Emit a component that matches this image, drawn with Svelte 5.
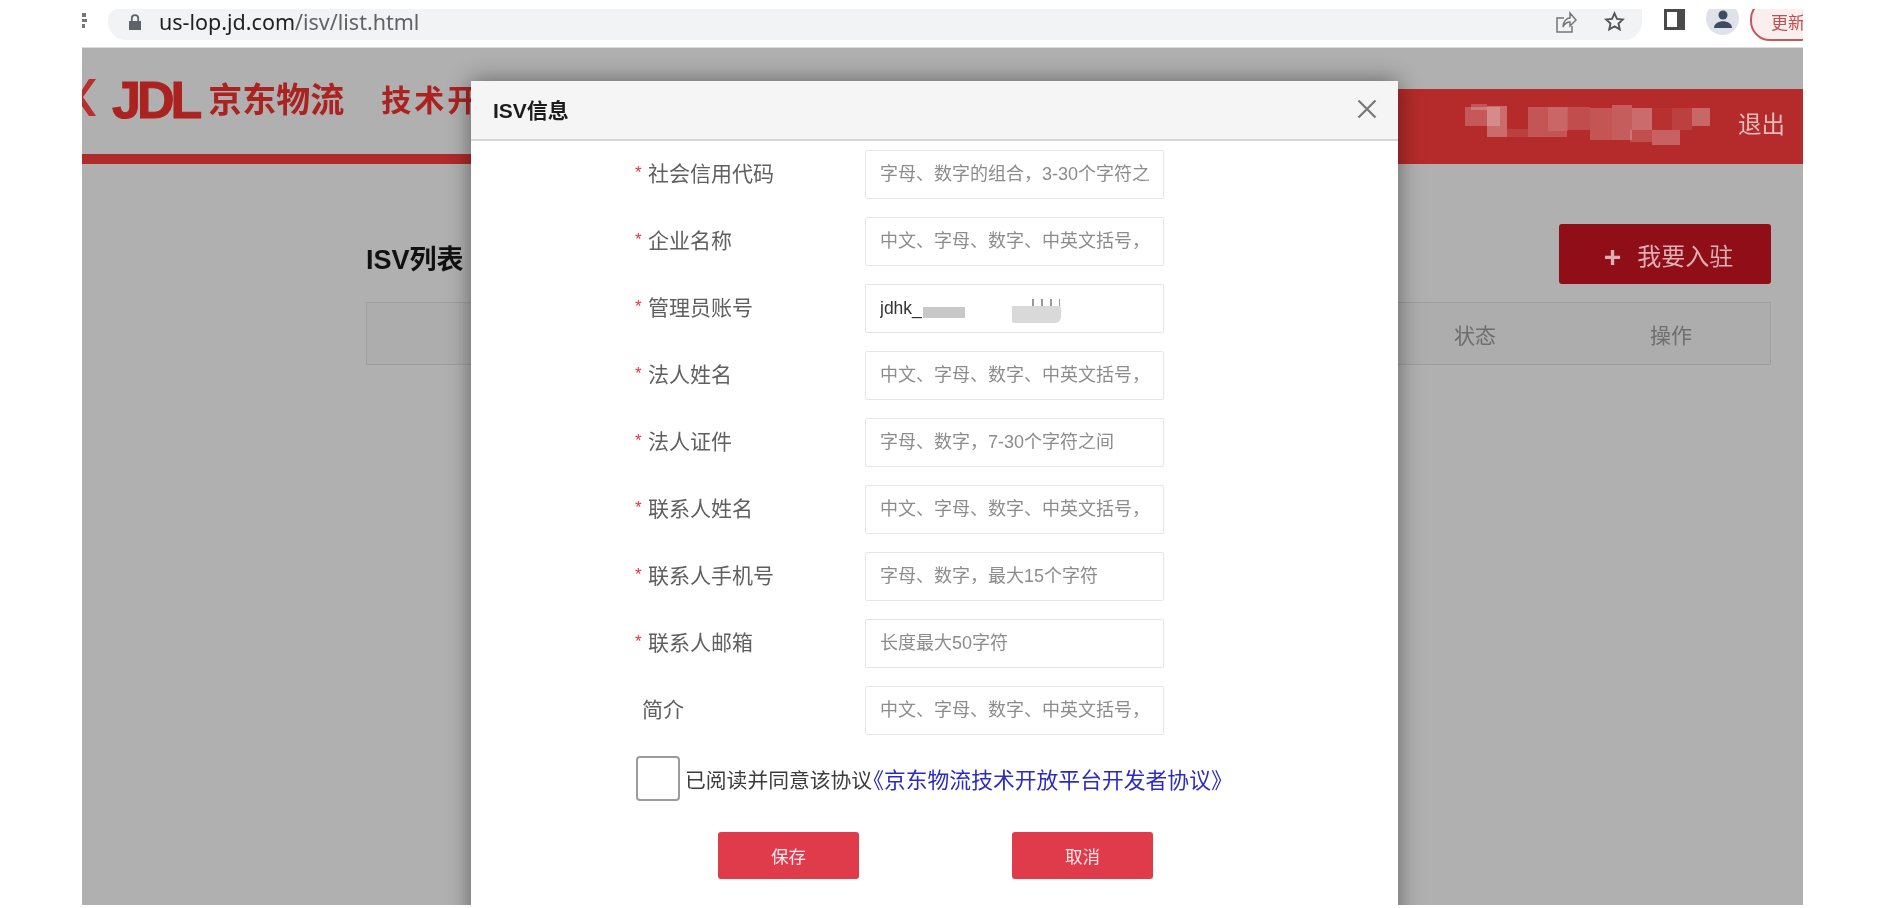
<script>
  const fields = [
    { label: '社会信用代码', required: true, hint: '字母、数字的组合，3-30个字符之间' },
    { label: '企业名称', required: true, hint: '中文、字母、数字、中英文括号，2-50个字符' },
    { label: '管理员账号', required: true, value: 'jdhk_', masked: true },
    { label: '法人姓名', required: true, hint: '中文、字母、数字、中英文括号，2-50个字符' },
    { label: '法人证件', required: true, hint: '字母、数字，7-30个字符之间' },
    { label: '联系人姓名', required: true, hint: '中文、字母、数字、中英文括号，2-50个字符' },
    { label: '联系人手机号', required: true, hint: '字母、数字，最大15个字符' },
    { label: '联系人邮箱', required: true, hint: '长度最大50字符' },
    { label: '简介', required: false, hint: '中文、字母、数字、中英文括号，2-50个字符' }
  ];

  // 用户名打码的马赛克 [x, y, w, h, 透明度]
  const mosaic = [
    [0, 3, 35, 19, 0.22], [6, 0, 16, 6, 0.2], [22, 2, 20, 31, 0.3], [42, 25, 21, 8, 0.1],
    [63, 3, 39, 30, 0.2], [83, 3, 20, 24, 0.1], [102, 3, 23, 23, 0.16], [125, 4, 22, 32, 0.2],
    [147, 1, 20, 35, 0.24], [167, 4, 20, 22, 0.3], [165, 26, 22, 12, 0.16], [187, 26, 28, 15, 0.26],
    [187, 4, 20, 22, 0.03], [207, 4, 20, 22, 0.1], [227, 4, 18, 18, 0.28]
  ];
</script>

<div class="screen">
  <div class="browser">
    <div class="toolbar">
      <div class="toolbar-row">
        <svg class="cut-icon" width="5" height="16" viewBox="0 0 5 16"><path d="M0 1h4v4H0zM0 7h5v3H0zM0 12h3v4H0z" fill="#777" /></svg>
        <div class="omnibox">
          <svg class="lock" width="14" height="16" viewBox="0 0 14 16">
            <path d="M1 7h12v9H1z" fill="#5f6368" />
            <path d="M3.8 7V4.4a3.2 3.2 0 0 1 6.4 0V7" fill="none" stroke="#5f6368" stroke-width="1.8" />
          </svg>
          <span class="url"><b>us-lop.jd.com</b>/isv/list.html</span>
          <svg class="share" width="22" height="24" viewBox="0 0 22 24" fill="none" stroke="#777" stroke-width="1.5">
            <path d="M9 8H2v14h15v-6" />
            <path d="M8 17c0-6 4-9 7-9V3l6 7-6 6v-4c-3 0-5 1-7 5z" />
          </svg>
          <svg class="star" width="21" height="21" viewBox="0 0 22 22" fill="none" stroke="#555" stroke-width="2">
            <path d="M11 2.5l2.6 5.7 6.2.7-4.6 4.2 1.3 6.1L11 16.1l-5.5 3.1 1.3-6.1-4.6-4.2 6.2-.7z" />
          </svg>
        </div>
        <div class="panel-icon"></div>
        <div class="avatar">
          <svg width="20" height="18" viewBox="0 0 22 20" fill="#3e4b60">
            <circle cx="11" cy="5.5" r="5" />
            <path d="M1 20c0-5 5-7.5 10-7.5s10 2.5 10 7.5z" />
          </svg>
        </div>
        <div class="update">更新</div>
      </div>
    </div>

    <div class="page">
      <header class="site-header">
        <div class="brand">
          <svg class="mark" width="14" height="37" viewBox="0 0 14 37"><path d="M14 0L1 18l13 19H7L0 27V11L7 0z" fill="#b6302f" /></svg>
          <span class="jdl">JDL</span>
          <span class="brand-name">京东物流</span>
          <span class="brand-sub">技术开放平台</span>
        </div>
        <div class="user-bar">
          <svg class="user-mask" width="250" height="42" viewBox="0 0 250 42">
            {#each mosaic as m}
              <rect x={m[0]} y={m[1]} width={m[2]} height={m[3]} fill="#fff" fill-opacity={m[4]} />
            {/each}
          </svg>
          <span class="logout">退出</span>
        </div>
      </header>

      <main class="list">
        <div class="list-head">
          <h2>ISV列表</h2>
          <button class="join"><span class="plus">+</span>我要入驻</button>
        </div>
        <div class="table-head">
          <span class="col-status">状态</span>
          <span class="col-action">操作</span>
        </div>
      </main>

      <div class="modal">
        <div class="modal-title">
          <span>ISV信息</span>
          <svg width="20" height="20" viewBox="0 0 20 20" stroke="#777" stroke-width="2.2"><path d="M1.5 1.5l17 17M18.5 1.5l-17 17" /></svg>
        </div>
        <div class="form">
          {#each fields as f}
            <div class="row">
              <label class="field-label" class:plain={!f.required}>
                {#if f.required}<i>*</i>{/if}{f.label}
              </label>
              <div class="field">
                <input class:filled={f.value} value={f.value ?? ''} placeholder={f.hint ?? ''} />
                {#if f.masked}
                  <span class="blot one"></span>
                  <span class="blot two"></span>
                  <span class="blot specks"></span>
                {/if}
              </div>
            </div>
          {/each}

          <div class="agree">
            <span class="check"></span>
            <span>已阅读并同意该协议</span><a href="/agreement">《京东物流技术开放平台开发者协议》</a>
          </div>

          <div class="actions">
            <button>保存</button>
            <button>取消</button>
          </div>
        </div>
      </div>
    </div>
  </div>
</div>

<style>
  :global(body) {
    margin: 0;
    background: #fff;
  }
  .screen {
    width: 1878px;
    height: 908px;
    overflow: hidden;
    padding-left: 82px;
    box-sizing: border-box;
    font-family: "Liberation Sans", "Noto Sans CJK SC", sans-serif;
    filter: blur(0.45px);
  }
  .browser { width: 1721px; }

  /* 浏览器工具栏，截图顶部被裁掉 */
  .toolbar {
    height: 48px;
    box-sizing: border-box;
    padding-top: 9px;
    background: #fff;
    border-bottom: 1px solid #dcdcdc;
  }
  .toolbar-row {
    height: 38px;
    display: flex;
    align-items: flex-start;
    overflow: hidden;
  }
  .cut-icon { margin-top: 3px; margin-right: 21px; flex: none; }
  .omnibox {
    width: 1534px;
    height: 31px;
    flex: none;
    box-sizing: border-box;
    padding-bottom: 6px;
    display: flex;
    align-items: center;
    background: #f1f3f4;
    border-radius: 10px 0 18px 18px;
  }
  .lock { margin-left: 20px; flex: none; }
  .url {
    margin-left: 17px;
    font-family: "Noto Sans", sans-serif;
    font-size: 21.5px;
    color: #5f6368;
    line-height: 25px;
  }
  .url b { font-weight: 400; color: #202124; }
  .share { margin-left: auto; flex: none; }
  .star { margin-left: 27px; margin-right: 17px; flex: none; }
  .panel-icon {
    margin-left: 22px;
    width: 21px;
    height: 21px;
    flex: none;
    box-sizing: border-box;
    border: 3px solid #4a4a4a;
    border-right-width: 8px;
    background: #fff;
  }
  .avatar {
    margin-left: 21px;
    margin-top: -7px;
    width: 33px;
    height: 33px;
    flex: none;
    border-radius: 50%;
    background: #dfe2e8;
    display: flex;
    align-items: center;
    justify-content: center;
  }
  .update {
    margin-left: 11px;
    margin-top: -10px;
    width: 70px;
    height: 42px;
    flex: none;
    box-sizing: border-box;
    padding: 8px 0 0 19px;
    border: 2px solid #c4585c;
    border-radius: 20px;
    background: #fbeeee;
    color: #c0504f;
    font-size: 17px;
    white-space: nowrap;
  }

  /* 页面（遮罩后） */
  .page {
    position: relative;
    height: 857px;
    overflow: hidden;
    background: #b0b0b0;
  }
  .site-header {
    display: flex;
    align-items: flex-end;
    height: 116px;
  }
  .brand {
    flex: 1;
    height: 100%;
    box-sizing: border-box;
    border-bottom: 10px solid #b02a2a;
    display: flex;
    align-items: flex-start;
    padding-top: 31px;
    color: #ab2320;
    white-space: nowrap;
    overflow: hidden;
  }
  .mark { flex: none; }
  .jdl {
    margin-left: 16px;
    margin-top: -3px;
    font-size: 52px;
    line-height: 48px;
    font-weight: 700;
    letter-spacing: -4px;
    -webkit-text-stroke: 1px #ab2320;
  }
  .brand-name {
    margin-left: 10px;
    margin-top: 3px;
    font-size: 34px;
    line-height: 36px;
    font-weight: 700;
  }
  .brand-sub {
    margin-left: 37px;
    margin-top: 4px;
    font-size: 30px;
    line-height: 36px;
    font-weight: 700;
    letter-spacing: 3px;
  }
  .user-bar {
    width: 560px;
    height: 75px;
    flex: none;
    box-sizing: border-box;
    background: #b52b2b;
    display: flex;
    align-items: center;
    justify-content: flex-end;
    padding-right: 18px;
  }
  .user-mask { margin-right: 23px; margin-top: -3px; }
  .logout { font-size: 23.5px; color: #e3bcbc; margin-top: -8px; }

  .list { padding: 60px 32px 0 284px; }
  .list-head {
    display: flex;
    justify-content: space-between;
    align-items: center;
  }
  .list-head h2 {
    margin: 0;
    padding-top: 7px;
    font-size: 27px;
    font-weight: 700;
    color: #111;
  }
  .join {
    width: 212px;
    height: 60px;
    border: 0;
    border-radius: 3px;
    background: #900e18;
    color: #dcb0b4;
    font-family: inherit;
    font-size: 24px;
    padding: 0 0 0 7px;
  }
  .plus { margin-right: 16px; font-size: 30px; font-weight: 700; line-height: 24px; vertical-align: -2px; }
  .table-head {
    margin-top: 18px;
    height: 63px;
    box-sizing: border-box;
    border: 1px solid #9e9e9e;
    background: #adadad;
    display: flex;
    align-items: center;
    justify-content: flex-end;
    color: #6e6e6e;
    font-size: 21px;
  }
  .col-status { margin-right: 154px; }
  .col-action { margin-right: 78px; }

  /* 弹窗 */
  .modal {
    position: absolute;
    left: 389px;
    top: 33px;
    width: 927px;
    height: 900px;
    background: #fff;
    box-shadow: 0 0 22px rgba(0, 0, 0, 0.45);
  }
  .modal-title {
    height: 60px;
    box-sizing: border-box;
    padding: 0 21px 2px 22px;
    display: flex;
    align-items: center;
    justify-content: space-between;
    background: #f5f5f5;
    border-bottom: 2px solid #d6d6d6;
    font-size: 21px;
    font-weight: 700;
    color: #1c1c1c;
  }
  .form { padding-top: 9px; }
  .row {
    display: flex;
    align-items: center;
    height: 49px;
    margin-bottom: 18px;
    padding-left: 164px;
  }
  .field-label {
    width: 230px;
    flex: none;
    font-size: 21px;
    color: #5f5f5f;
    white-space: nowrap;
    margin-top: -6px;
  }
  .field-label.plain { padding-left: 7px; width: 223px; }
  .field-label i {
    display: inline-block;
    width: 13px;
    color: #e5343f;
    font-style: normal;
    font-size: 17px;
    vertical-align: 3px;
  }
  .field { position: relative; }
  input {
    display: block;
    width: 299px;
    height: 49px;
    box-sizing: border-box;
    border: 1px solid #e6e6e6;
    border-radius: 2px;
    padding: 0 14px;
    font-family: inherit;
    font-size: 18px;
    color: #333;
    outline: none;
  }
  input::placeholder { color: #8c8c8c; opacity: 1; }
  input.filled { font-size: 17.5px; padding-left: 14px; }
  .blot { position: absolute; display: block; }
  .blot.one { left: 58px; top: 23px; width: 42px; height: 11px; background: #c8c8c8; }
  .blot.two { left: 147px; top: 22px; width: 49px; height: 17px; background: #d9d9d9; border-radius: 0 2px 6px 2px; }
  .blot.specks {
    left: 167px;
    top: 15px;
    width: 28px;
    height: 7px;
    background: repeating-linear-gradient(90deg, #999 0 2px, transparent 2px 9px);
  }

  .agree {
    display: flex;
    align-items: center;
    padding-left: 165px;
    margin-top: 21px;
    font-size: 20.8px;
    color: #3c3c3c;
    white-space: nowrap;
  }
  .check {
    width: 44px;
    height: 45px;
    box-sizing: border-box;
    margin-right: 5px;
    border: 2px solid #9c9c9c;
    border-radius: 4px;
  }
  .agree a {
    margin-left: -10px;
    font-size: 21.8px;
    color: #2b2bc4;
    text-decoration: none;
  }
  .actions {
    display: flex;
    gap: 153px;
    padding-left: 247px;
    margin-top: 31px;
  }
  .actions button {
    width: 141px;
    height: 47px;
    border: 0;
    border-radius: 3px;
    background: #e03b4b;
    color: #fdeaec;
    font-family: inherit;
    font-size: 17.5px;
  }
</style>
